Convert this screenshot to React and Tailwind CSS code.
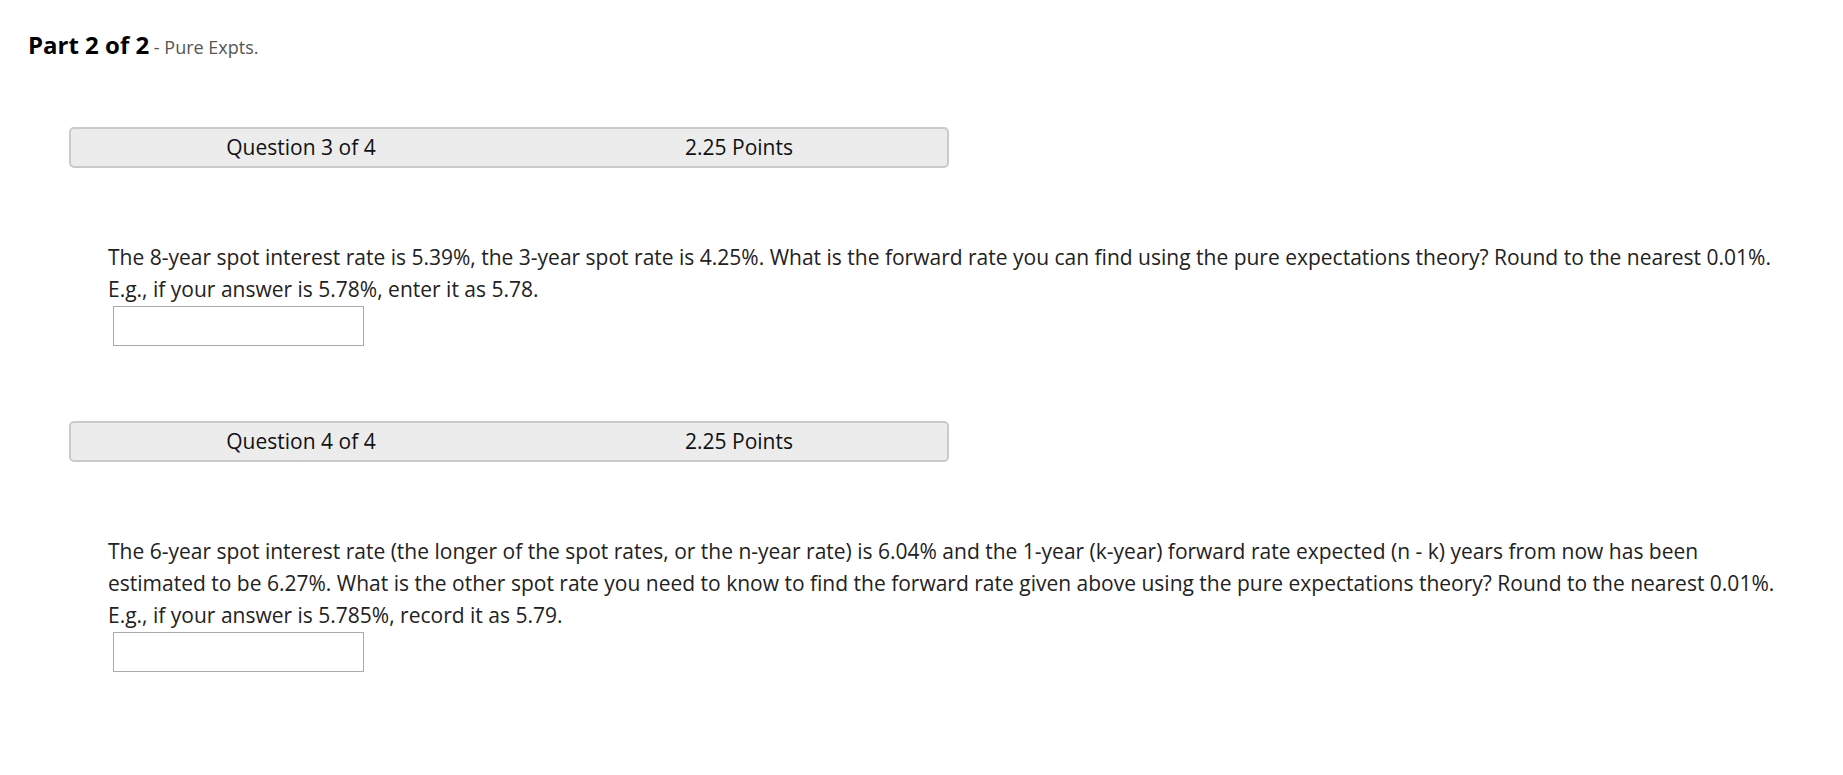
import React from 'react';

const questions = [
  {
    num: 3,
    points: '2.25',
    text: 'The 8-year spot interest rate is 5.39%, the 3-year spot rate is 4.25%. What is the forward rate you can find using the pure expectations theory? Round to the nearest 0.01%. E.g., if your answer is 5.78%, enter it as 5.78.',
  },
  {
    num: 4,
    points: '2.25',
    text: 'The 6-year spot interest rate (the longer of the spot rates, or the n-year rate) is 6.04% and the 1-year (k-year) forward rate expected (n - k) years from now has been estimated to be 6.27%. What is the other spot rate you need to know to find the forward rate given above using the pure expectations theory? Round to the nearest 0.01%. E.g., if your answer is 5.785%, record it as 5.79.',
  },
];

function Question({ q, first }) {
  return (
    <div className={first ? 'mt-[63px]' : 'mt-[75px]'}>
      <div className="w-[880px] h-[41px] border-2 border-[#cacaca] rounded-[5px] bg-[#ececec] grid grid-cols-2 items-center text-[21px] text-[#111]">
        <div className="pl-[22px] text-center">Question {q.num} of 4</div>
        <div className="pl-[22px] text-center">{q.points} Points</div>
      </div>
      <div className="mt-[73px] pl-[39px] text-[21px] leading-[32px] text-[#222]">
        <p>{q.text}</p>
        <input
          type="text"
          className="block ml-[5px] mt-[1px] w-[251px] h-[40px] border border-[#aaaaaa] bg-white outline-none"
        />
      </div>
    </div>
  );
}

export default function App() {
  return (
    <div className="min-h-screen bg-white font-['Open_Sans',sans-serif]">
      <div className="pt-[29px] pl-[28px] leading-[32px]">
        <span className="text-[24px] font-bold text-black">Part 2 of 2</span>
        <span className="text-[18px] text-[#555]"> - Pure Expts.</span>
      </div>
      <div className="pl-[69px] pr-[60px]">
        {questions.map((q, i) => (
          <Question key={q.num} q={q} first={i === 0} />
        ))}
      </div>
    </div>
  );
}
